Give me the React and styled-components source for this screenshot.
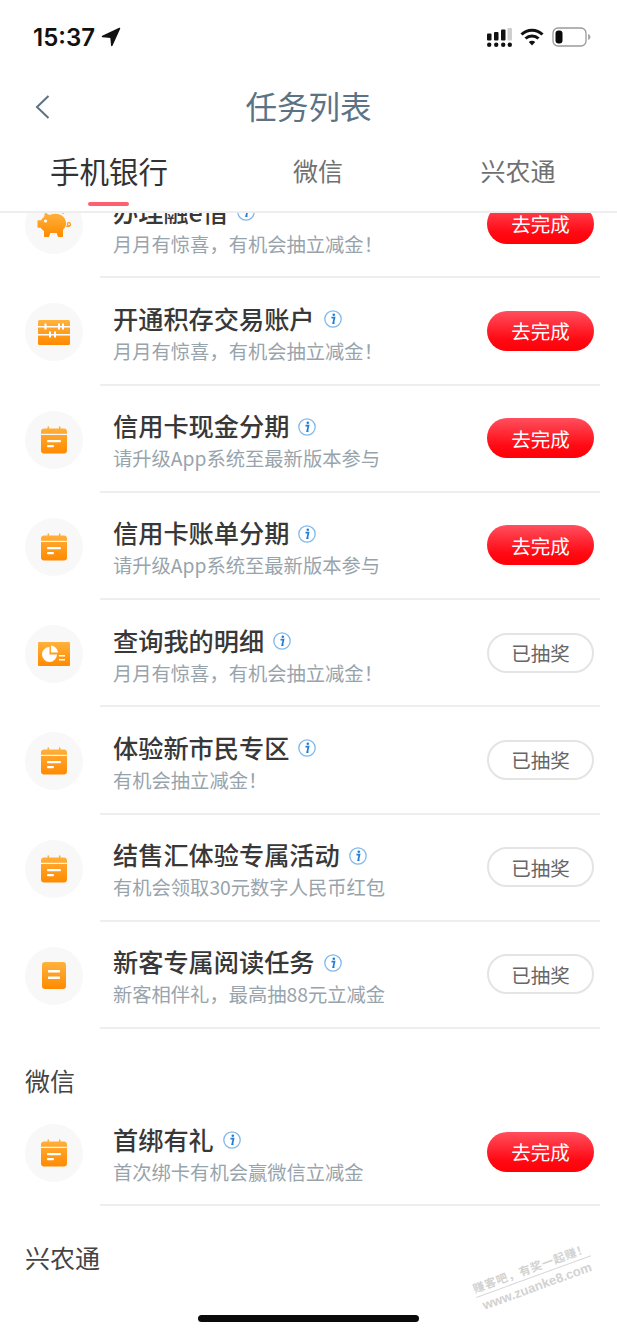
import React from 'react';
import styled, { createGlobalStyle } from 'styled-components';

const GlobalStyle = createGlobalStyle`
  html, body {
    margin: 0;
    padding: 0;
    background: #fff;
  }
  body {
    font-family: "Noto Sans CJK SC", "Noto Sans", sans-serif;
  }
`;

const Page = styled.div`
  position: relative;
  width: 617px;
  height: 1334px;
  overflow: hidden;
  display: flex;
  flex-direction: column;
  background: #fff;
`;

const StatusBar = styled.div`
  height: 74px;
  box-sizing: border-box;
  padding: 0 25px 0 33px;
  display: flex;
  justify-content: space-between;
  align-items: center;
`;

const TimeGroup = styled.div`
  display: flex;
  align-items: center;
  gap: 6px;
`;

const Time = styled.span`
  font-family: Inter, Roboto, sans-serif;
  font-size: 24px;
  font-weight: 600;
  color: #111;
`;

const StatusIcons = styled.div`
  display: flex;
  align-items: center;
  gap: 8px;
`;

const NavBar = styled.div`
  position: relative;
  height: 66px;
  box-sizing: border-box;
  padding-bottom: 4px;
  display: flex;
  align-items: center;
  justify-content: center;
`;

const BackButton = styled.div`
  position: absolute;
  left: 35px;
  top: 21px;
  display: flex;
`;

const PageTitle = styled.h1`
  margin: 0;
  font-size: 31.5px;
  font-weight: 400;
  color: #5c7285;
`;

const Tabs = styled.div`
  height: 73px;
  box-sizing: border-box;
  border-bottom: 2px solid #eeeeee;
  display: flex;
  position: relative;
  z-index: 1;
  background: #fff;
`;

const Tab = styled.div`
  position: relative;
  width: ${p => p.$w}px;
  margin-left: ${p => p.$left}px;
  text-align: center;
  padding-top: ${p => (p.$active ? 8 : 11)}px;
  font-size: ${p => (p.$active ? 29.5 : 25)}px;
  line-height: ${p => (p.$active ? 44 : 38)}px;
  color: ${p => (p.$active ? '#333' : '#707070')};
`;

const TabLine = styled.div`
  position: absolute;
  left: 38px;
  bottom: 5px;
  width: 41px;
  height: 4px;
  border-radius: 2px;
  background: #ff6070;
`;

const ListViewport = styled.div`
  flex: 1;
  overflow: hidden;
`;

const List = styled.div`
  margin-top: -42px;
`;

const Row = styled.div`
  display: flex;
  height: 107.25px;
  padding-left: 25px;
  padding-right: 17px;
`;

const IconCircle = styled.div`
  flex: none;
  width: 58px;
  height: 58px;
  margin-top: 25px;
  border-radius: 50%;
  background: #f8f8f8;
  display: flex;
  align-items: center;
  justify-content: center;
`;

const RowBody = styled.div`
  flex: 1;
  margin-left: 17px;
  padding: 0 6px 0 13px;
  box-sizing: border-box;
  border-bottom: 2px solid #eeeeee;
  display: flex;
  align-items: center;
  justify-content: space-between;
`;

const RowText = styled.div`
  display: flex;
  flex-direction: column;
  padding-top: 4px;
`;

const TitleLine = styled.div`
  display: flex;
  align-items: center;
  gap: 9px;
  height: 36px;
`;

const Title = styled.span`
  font-size: 25.2px;
  font-weight: 500;
  color: #383838;
  line-height: 36px;
  white-space: nowrap;
`;

const InfoMark = styled.svg`
  flex: none;
  margin-top: 3px;
`;

const Subtitle = styled.div`
  font-size: 19.3px;
  color: #98a4ac;
  line-height: 30px;
  white-space: nowrap;
`;

const ActionButton = styled.div`
  flex: none;
  width: 107px;
  height: 40px;
  box-sizing: border-box;
  border-radius: 20px;
  display: flex;
  align-items: center;
  justify-content: center;
  font-size: 19.5px;
  ${p =>
    p.$done
      ? `
    border: 2px solid #e4e4e4;
    background: #fff;
    color: #666;
  `
      : `
    background: linear-gradient(180deg, #ff4f5e 0%, #ff0a14 70%, #ff0008 100%);
    color: #fff;
  `}
`;

const SectionHeading = styled.div`
  height: 70px;
  box-sizing: border-box;
  padding: ${p => p.$top}px 0 0 25px;
  font-size: 25px;
  line-height: 36px;
  color: #444;
`;

const HomeIndicator = styled.div`
  position: absolute;
  left: 198px;
  bottom: 12px;
  width: 221px;
  height: 7px;
  border-radius: 4px;
  background: #0a0a0a;
`;

const Watermark = styled.div`
  position: absolute;
  left: 473px;
  top: 1258px;
  width: 122px;
  transform: rotate(-20deg);
  text-align: center;
  color: #d2d2d2;
  font-weight: 700;
`;

const WatermarkTop = styled.div`
  font-size: 11.5px;
  line-height: 18px;
  white-space: nowrap;
  letter-spacing: 0.7px;
  border-bottom: 1px solid #d8d8d8;
`;

const WatermarkBottom = styled.div`
  font-family: "Liberation Sans", sans-serif;
  font-size: 13px;
  line-height: 20px;
  white-space: nowrap;
`;

const Gradient = () => (
  <defs>
    <linearGradient id="orange" x1="0" y1="0" x2="0" y2="1">
      <stop offset="0" stopColor="#ffb23e" />
      <stop offset="1" stopColor="#ff8a00" />
    </linearGradient>
  </defs>
);

const PigIcon = () => (
  <svg width="36" height="28" viewBox="0 0 36 28">
    <Gradient />
    <path
      fill="url(#orange)"
      d="M9 1.5l4.5 2.5c2-.8 4-1.2 6-1.2 6 0 10 3.6 10.5 9 .2 3-1 5.300-3 7v6.200c0 .6-.4 1-1 1h-3.300c-.5 0-.8-.3-1-.8l-1-3.200h-6.400l-1 3.200c-.2.500-.500.800-1 .800h-3.300c-.6 0-1-.4-1-1v-5c-1.500-1-2.500-2-3.200-3.300h-2.300c-.6 0-1-.4-1-1v-5.500c0-.6.400-1 1-1h2.600c.7-1.300 1.700-2.400 2.900-3.200z"
    />
    <circle cx="9.500" cy="10" r="1.600" fill="#fff" />
    <circle cx="27" cy="1.500" r="1.300" fill="#ff9a1a" />
    <path d="M30 15c2.500 1 5 0 4.500-2.200-.5-2-3.500-1.500-3 .7.300 1.300 2 1.500 3 .7" fill="none" stroke="#ff9a1a" strokeWidth="1.200" />
  </svg>
);

const AbacusIcon = () => (
  <svg width="32" height="25" viewBox="0 0 32 25">
    <Gradient />
    <rect x="0" y="0" width="32" height="25" rx="1.500" fill="url(#orange)" />
    <g fill="#fff">
      <rect x="0" y="6" width="32" height="1.500" />
      <rect x="0" y="14" width="32" height="1.500" />
      <rect x="6.500" y="3.500" width="2" height="6" />
      <rect x="20" y="3.500" width="2" height="6" />
      <rect x="24" y="3.500" width="2" height="6" />
      <rect x="11" y="11.500" width="2" height="6" />
      <rect x="16" y="11.500" width="2" height="6" />
    </g>
  </svg>
);

const CalendarIcon = () => (
  <svg width="26" height="28" viewBox="0 0 26 28">
    <Gradient />
    <path
      fill="url(#orange)"
      d="M3 2.500h3.500V1c0-1 1.600-1 1.600 0v1.500h9.800V1c0-1 1.600-1 1.600 0v1.500H23c1.700 0 3 1.300 3 3v2.300H0V5.500c0-1.700 1.300-3 3-3zM0 9h26v15.500c0 1.700-1.300 3-3 3H3c-1.700 0-3-1.300-3-3z"
    />
    <rect x="6" y="14" width="14" height="2.200" rx="1" fill="#fff" />
    <rect x="6" y="19" width="7" height="2.200" rx="1" fill="#fff" />
  </svg>
);

const PieIcon = () => (
  <svg width="32" height="24" viewBox="0 0 32 24">
    <Gradient />
    <rect x="0" y="0" width="32" height="24" rx="1" fill="url(#orange)" />
    <path d="M11.500 5v7.500h7.500A7.500 7.500 0 1 1 11.500 5z" fill="#fff" />
    <path d="M13 3.500a7.500 7.500 0 0 1 7 7h-7z" fill="#fff" />
    <rect x="21" y="13" width="6" height="1.500" fill="#fff" />
    <rect x="21" y="17" width="6" height="1.500" fill="#fff" />
  </svg>
);

const DocIcon = () => (
  <svg width="24" height="27" viewBox="0 0 24 27">
    <Gradient />
    <rect x="0" y="0" width="24" height="27" rx="3" fill="url(#orange)" />
    <rect x="6" y="8" width="12" height="2.500" rx="0.500" fill="#fff" />
    <rect x="6" y="14.500" width="12" height="2.500" rx="0.500" fill="#fff" />
  </svg>
);

const InfoIcon = () => (
  <InfoMark width="18" height="18" viewBox="0 0 18 18">
    <circle cx="9" cy="9" r="8.200" fill="none" stroke="#7fb9ec" strokeWidth="1.300" />
    <circle cx="9.800" cy="4.800" r="1.300" fill="#1f7fd6" />
    <path d="M7.500 7.600h3l-1.300 5.600h1.300" fill="none" stroke="#1f7fd6" strokeWidth="1.700" />
  </InfoMark>
);

const icons = {
  pig: PigIcon,
  abacus: AbacusIcon,
  calendar: CalendarIcon,
  pie: PieIcon,
  doc: DocIcon,
};

const bankTasks = [
  { icon: 'pig', title: '办理融e借', sub: '月月有惊喜，有机会抽立减金！' },
  { icon: 'abacus', title: '开通积存交易账户', sub: '月月有惊喜，有机会抽立减金！' },
  { icon: 'calendar', title: '信用卡现金分期', sub: '请升级App系统至最新版本参与' },
  { icon: 'calendar', title: '信用卡账单分期', sub: '请升级App系统至最新版本参与' },
  { icon: 'pie', title: '查询我的明细', sub: '月月有惊喜，有机会抽立减金！', done: true },
  { icon: 'calendar', title: '体验新市民专区', sub: '有机会抽立减金！', done: true },
  { icon: 'calendar', title: '结售汇体验专属活动', sub: '有机会领取30元数字人民币红包', done: true },
  { icon: 'doc', title: '新客专属阅读任务', sub: '新客相伴礼，最高抽88元立减金', done: true },
];

const wechatTasks = [
  { icon: 'calendar', title: '首绑有礼', sub: '首次绑卡有机会赢微信立减金' },
];

const TaskRow = ({ task }) => {
  const Icon = icons[task.icon];
  return (
    <Row>
      <IconCircle>
        <Icon />
      </IconCircle>
      <RowBody>
        <RowText>
          <TitleLine>
            <Title>{task.title}</Title>
            <InfoIcon />
          </TitleLine>
          <Subtitle>{task.sub}</Subtitle>
        </RowText>
        <ActionButton $done={task.done}>{task.done ? '已抽奖' : '去完成'}</ActionButton>
      </RowBody>
    </Row>
  );
};

const App = () => (
  <Page>
    <GlobalStyle />
    <StatusBar>
      <TimeGroup>
        <Time>15:37</Time>
        <svg width="20" height="20" viewBox="0 0 20 20">
          <path d="M18.500 1.500L1.500 9.500l8.500 .8 .8 8.200z" fill="#111" stroke="#111" strokeWidth="1.500" strokeLinejoin="round" />
        </svg>
      </TimeGroup>
      <StatusIcons>
        <svg width="25" height="19" viewBox="0 0 25 19">
          <g fill="#111">
            <rect x="0" y="5.500" width="4.500" height="7" rx="1" />
            <rect x="7" y="4" width="4.500" height="8.500" rx="1" />
            <rect x="14" y="1.500" width="4.500" height="11" rx="1" />
            <circle cx="2.200" cy="16.800" r="2.200" />
            <circle cx="9.200" cy="16.800" r="2.200" />
            <circle cx="16.200" cy="16.800" r="2.200" />
            <circle cx="22.800" cy="16.800" r="2.200" />
          </g>
          <rect x="20.500" y="0" width="4.500" height="12.500" rx="1" fill="#cfcfcf" />
        </svg>
        <svg width="24" height="18" viewBox="0 0 24 18">
          <g fill="none" stroke="#111" strokeWidth="3">
            <path d="M1.500 6.500a15 15 0 0 1 21 0" />
            <path d="M5.500 10.500a9.500 9.500 0 0 1 13 0" />
          </g>
          <path d="M8.800 14a4.500 4.500 0 0 1 6.400 0L12 17.500z" fill="#111" />
        </svg>
        <svg width="40" height="20" viewBox="0 0 40 20">
          <rect x="1" y="1" width="33" height="18" rx="5" fill="none" stroke="#9a9a9a" strokeWidth="1.300" />
          <rect x="3.500" y="3.500" width="7" height="13" rx="3" fill="#0a0a0a" />
          <path d="M36 7v6c1.500-.3 2.500-1.500 2.500-3s-1-2.700-2.500-3z" fill="#aaa" />
        </svg>
      </StatusIcons>
    </StatusBar>
    <NavBar>
      <BackButton>
        <svg width="15" height="24" viewBox="0 0 15 24">
          <path d="M13.500 1L2 12l11.500 11" fill="none" stroke="#5c7285" strokeWidth="2" />
        </svg>
      </BackButton>
      <PageTitle>任务列表</PageTitle>
    </NavBar>
    <Tabs>
      <Tab $active $w={118} $left={50}>
        手机银行
        <TabLine />
      </Tab>
      <Tab $w={50} $left={125}>微信</Tab>
      <Tab $w={76} $left={137}>兴农通</Tab>
    </Tabs>
    <ListViewport>
      <List>
        {bankTasks.map(task => (
          <TaskRow key={task.title} task={task} />
        ))}
        <SectionHeading $top={33}>微信</SectionHeading>
        {wechatTasks.map(task => (
          <TaskRow key={task.title} task={task} />
        ))}
        <SectionHeading $top={33}>兴农通</SectionHeading>
      </List>
    </ListViewport>
    <Watermark>
      <WatermarkTop>赚客吧，有奖一起赚！</WatermarkTop>
      <WatermarkBottom>www.zuanke8.com</WatermarkBottom>
    </Watermark>
    <HomeIndicator />
  </Page>
);

export default App;
